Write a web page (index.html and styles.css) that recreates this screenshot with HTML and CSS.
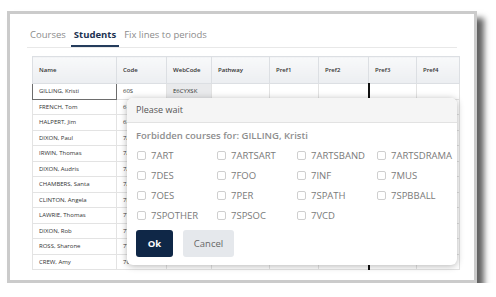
FILE: index.html
```html
<!DOCTYPE html>
<html>
<head>
	<title>Students</title>
	<meta name="viewport" content="width=device-width, initial-scale=1">
	<link rel="stylesheet" href="styles.css">
</head>
<body>
	<div class="frame">
		<nav class="tabs">
			<span class="tab">Courses</span>
			<span class="tab active">Students</span>
			<span class="tab">Fix lines to periods</span>
		</nav>
		<div class="grid-wrap">
			<table class="grid">
				<colgroup>
					<col style="width:84px"><col style="width:50px"><col style="width:45px"><col style="width:58px">
					<col style="width:49px"><col style="width:50px"><col style="width:48px"><col style="width:43px">
				</colgroup>
				<thead>
					<tr><th>Name</th><th>Code</th><th>WebCode</th><th>Pathway</th><th>Pref1</th><th>Pref2</th><th>Pref3</th><th>Pref4</th></tr>
				</thead>
				<tbody>
					<tr><td class="sel">GILLING, Kristi</td><td>60S</td><td class="ro">E6CYXSK</td><td></td><td></td><td></td><td class="mark"></td><td></td></tr>
					<tr><td>FRENCH, Tom</td><td>61S</td><td></td><td></td><td></td><td></td><td class="mark"></td><td></td></tr>
					<tr><td>HALPERT, Jim</td><td>62S</td><td></td><td></td><td></td><td></td><td class="mark"></td><td></td></tr>
					<tr><td>DIXON, Paul</td><td>7A</td><td></td><td></td><td></td><td></td><td class="mark"></td><td></td></tr>
					<tr><td>IRWIN, Thomas</td><td>7A</td><td></td><td></td><td></td><td></td><td class="mark"></td><td></td></tr>
					<tr><td>DIXON, Audris</td><td>7A</td><td></td><td></td><td></td><td></td><td class="mark"></td><td></td></tr>
					<tr><td>CHAMBERS, Santa</td><td>7A</td><td></td><td></td><td></td><td></td><td class="mark"></td><td></td></tr>
					<tr><td>CLINTON, Angela</td><td>7B</td><td></td><td></td><td></td><td></td><td class="mark"></td><td></td></tr>
					<tr><td>LAWRIE, Thomas</td><td>7T</td><td></td><td></td><td></td><td></td><td class="mark"></td><td></td></tr>
					<tr><td>DIXON, Rob</td><td>7T</td><td></td><td></td><td></td><td></td><td class="mark"></td><td></td></tr>
					<tr><td>ROSS, Sharone</td><td>7T</td><td></td><td></td><td></td><td></td><td class="mark"></td><td></td></tr>
					<tr><td>CREW, Amy</td><td>7C</td><td></td><td></td><td></td><td></td><td class="mark"></td><td></td></tr>
				</tbody>
			</table>

			<div class="dialog">
				<div class="dialog-title">Please wait</div>
				<div class="dialog-body">
					<div class="forbid">Forbidden courses for: GILLING, Kristi</div>
					<div class="checks">
						<label class="check"><span class="box"></span>7ART</label>
						<label class="check"><span class="box"></span>7ARTSART</label>
						<label class="check"><span class="box"></span>7ARTSBAND</label>
						<label class="check"><span class="box"></span>7ARTSDRAMA</label>
						<label class="check"><span class="box"></span>7DES</label>
						<label class="check"><span class="box"></span>7FOO</label>
						<label class="check"><span class="box"></span>7INF</label>
						<label class="check"><span class="box"></span>7MUS</label>
						<label class="check"><span class="box"></span>7OES</label>
						<label class="check"><span class="box"></span>7PER</label>
						<label class="check"><span class="box"></span>7SPATH</label>
						<label class="check"><span class="box"></span>7SPBBALL</label>
						<label class="check"><span class="box"></span>7SPOTHER</label>
						<label class="check"><span class="box"></span>7SPSOC</label>
						<label class="check"><span class="box"></span>7VCD</label>
					</div>
					<div class="actions">
						<button class="btn btn-ok">Ok</button>
						<button class="btn btn-cancel">Cancel</button>
					</div>
				</div>
			</div>
		</div>
	</div>
</body>
</html>
```

FILE: styles.css
```css
body{
	margin: 0;
	background: #fff;
	font-family: "Open Sans", "Noto Sans", sans-serif;
}
.frame{
	margin: 11px 0 0 7px;
	width: 470px;
	height: 272px;
	box-sizing: border-box;
	border: 3px solid #cbcbcb;
	background: #fff;
	padding: 12px 17px 0 17px;
	box-shadow: 7px 7px 6px rgba(0,0,0,.62);
}
.tabs{
	display: flex;
	gap: 2px;
	border-bottom: 1px solid #e8e8e8;
}
.tab{
	height: 21px;
	box-sizing: border-box;
	line-height: 17px;
	padding: 0 3px;
	font-size: 9.5px;
	color: #8c8c8c;
	border-bottom: 2px solid transparent;
}
.tab.active{
	color: #1d3352;
	font-weight: 700;
	border-bottom-color: #243c5c;
}
.grid-wrap{
	position: relative;
	margin: 8px 0 0 5px;
}
.grid{
	border-collapse: collapse;
	table-layout: fixed;
	width: 427px;
	font-size: 6px;
	color: #333;
}
.grid th{
	height: 26px;
	padding: 0 6px;
	text-align: left;
	font-weight: 600;
	background: linear-gradient(#f8f9fa, #eceef1);
	border: 1px solid #dcdfe3;
}
.grid td{
	height: 15.5px;
	box-sizing: border-box;
	padding: 0 6px;
	border: 1px solid #e3e3e3;
	white-space: nowrap;
	overflow: hidden;
}
.grid td.sel{
	border: 1px solid #6d6d6d;
}
.grid td.ro{
	background: #e9eaec;
}
.grid td.mark{
	border-left: 2px solid #111;
}
.dialog{
	position: absolute;
	left: 95px;
	top: 42px;
	width: 330px;
	height: 167px;
	background: #fff;
	border-radius: 6px;
	box-shadow: 0 1px 7px rgba(0,0,0,.3);
	overflow: hidden;
}
.dialog-title{
	height: 24px;
	line-height: 24px;
	padding: 0 9px;
	background: #f5f5f5;
	border-bottom: 1px solid #e2e2e2;
	font-size: 9px;
	color: #555;
}
.dialog-body{
	padding: 6px 9px 0 9px;
}
.forbid{
	font-size: 9.5px;
	font-weight: 600;
	color: #8e8e8e;
	line-height: 14px;
}
.checks{
	display: grid;
	grid-template-columns: repeat(4, 80px);
	row-gap: 6px;
	margin-top: 5px;
}
.check{
	display: flex;
	align-items: center;
	height: 14px;
	font-size: 9.5px;
	color: #7a7a7a;
	white-space: nowrap;
}
.box{
	width: 9px;
	height: 9px;
	box-sizing: border-box;
	border: 1px solid #cfcfcf;
	border-radius: 2px;
	margin: 0 5px 0 1px;
}
.actions{
	display: flex;
	gap: 10px;
	margin-top: 8px;
}
.btn{
	height: 27px;
	border: none;
	border-radius: 3px;
	font-family: "Open Sans", "Noto Sans", sans-serif;
	font-size: 9.5px;
	padding: 0;
}
.btn-ok{
	width: 37px;
	background: #0f2747;
	color: #fff;
	font-weight: 700;
}
.btn-cancel{
	width: 51px;
	background: #e5e8ec;
	color: #666;
}
```
